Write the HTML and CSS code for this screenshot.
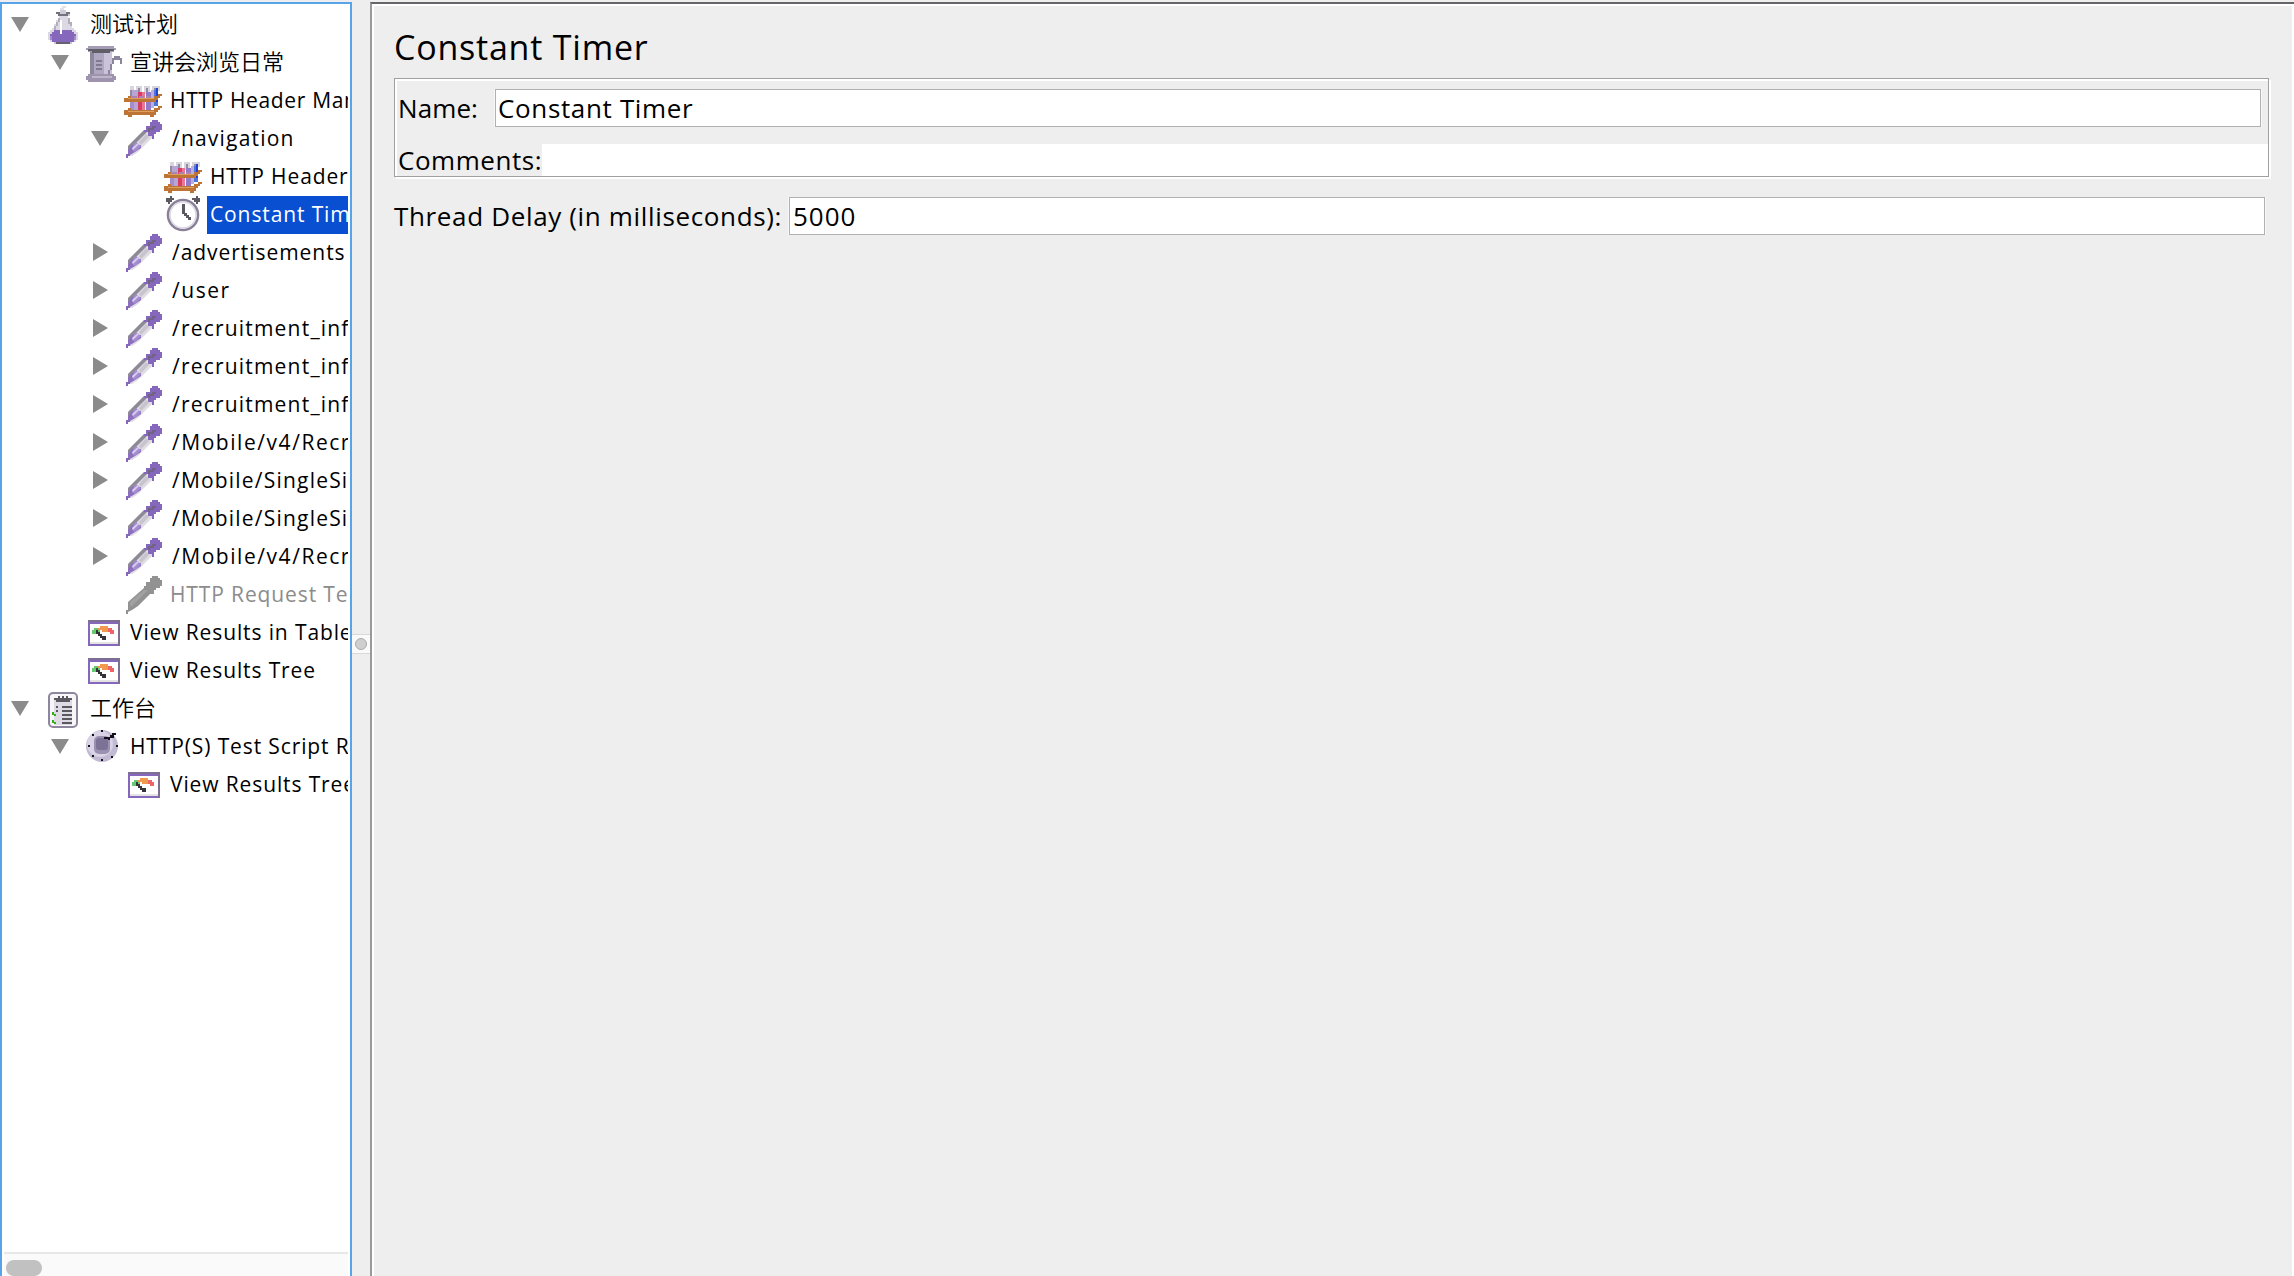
FILE: index.html
```html
<!DOCTYPE html>
<html lang="zh">
<head>
<meta charset="utf-8">
<title>Constant Timer</title>
<link rel="stylesheet" href="styles.css">
</head>
<body>
<svg class="sprite" aria-hidden="true" shape-rendering="crispEdges">
  <symbol id="down" viewBox="0 0 18 18"><path d="M0 2H18L9 17Z" fill="#8b8b8b" shape-rendering="auto"/></symbol>
  <symbol id="right" viewBox="0 0 18 18"><path d="M2 0V18L17 9Z" fill="#8b8b8b" shape-rendering="auto"/></symbol>
  <symbol id="flask" viewBox="0 0 40 38">
    <path d="M18 0h4v2h-2v2h-4V2h2z" fill="#e2e0e8"/>
    <path d="M16 4h6v2h-6zM14 6h12v4H14z" fill="#cfcbd8"/>
    <path d="M15 10h9v4h2v4h2v4h2v2h2v2h2v8h-2v2H6v-2H4v-8h2v-2h2v-2h2v-4h2v-4h3z" fill="#dcd9e4"/>
    <path d="M10 24h18v2h2v2h2v6h-2v2H8v-2H6v-6h2v-2h2z" fill="#8568bb"/>
    <path d="M6 30h2v4H6zM30 30h2v4h-2z" fill="#a28cca"/>
    <path d="M10 36h18v2H10z" fill="#c9c4d6"/>
    <path d="M12 36h14v2H12z" fill="#67636d"/>
    <path d="M12 6h4v2h-4zM14 8h10v2H14zM22 6h4v2h-4z" fill="#75717d"/>
    <path d="M14 12h2v4h-2v4h-2v4h-2v-4h2v-4h2zM24 12h2v4h2v4h-2v-2h-2z" fill="#b3afba"/>
    <path d="M16 14h2v14h-2z" fill="#fff"/>
  </symbol>
  <symbol id="beaker" viewBox="0 0 40 38">
    <path d="M6 6h22v26H6z" fill="#b0a7c2"/>
    <path d="M20 8h8v22h-8z" fill="#cbc3da"/>
    <path d="M6 8h4v24H6z" fill="#8e869b"/>
    <path d="M28 14h2v-2h6v2h2v6h-2v-4h-6v4h-2v6h-2v4h-2v-4h2v-6h2z" fill="#8d859c"/>
    <path d="M4 2h26v2h2v2h-2v2H4V6H2V4h2z" fill="#a69db6"/>
    <path d="M4 5h26v2H4zM8 7h18v2H8z" fill="#625e68"/>
    <path d="M12 16h6v2h-6zM12 20h6v2h-6zM12 24h6v2h-6z" fill="#827a90"/>
    <path d="M4 30h26v2h2v4h-2v2H4v-2H2v-4h2z" fill="#9e94ae"/>
    <path d="M8 32h20v2H8z" fill="#beb7cc"/>
  </symbol>
  <symbol id="rack" viewBox="0 0 40 38">
    <path d="M6 4h4v4H6zM12 4h6v8h-6zM20 4h6v8h-6zM28 4h8v5h-8z" fill="#d8d5dd"/>
    <path d="M6 8h2v8H6zM14 6h2v10h-2zM22 6h2v10h-2zM30 6h2v10h-2z" fill="#918aa0"/>
    <path d="M8 8h6v20H8z" fill="#b7a6d4"/><path d="M6 14h4v14H6z" fill="#a58cce"/>
    <path d="M14 10h4v18h-4z" fill="#d73d64"/><path d="M18 10h3v18h-3z" fill="#ea7894"/>
    <path d="M22 10h5v18h-5z" fill="#927acb"/><path d="M27 8h3v18h-3z" fill="#b5b0dc"/>
    <path d="M30 8h4v16h-4z" fill="#5272de"/><path d="M32 6h2v14h-2z" fill="#2244d0"/>
    <path d="M4 14h3v2h23v-2h4v-2h4v2h-2v2h-2v2h-2v2H0v-4h4z" fill="#bd7435"/>
    <path d="M4 26h3v2h23v-2h4v-2h4v2h-2v2h-2v2h-2v3h-2v2h-4v-2H8v2H4v-2H0v-5h4z" fill="#bd7435"/>
    <path d="M4 16h26v1H4zM4 29h26v1H4z" fill="#dca05d"/>
    <path d="M8 14h5v2H8zM15 14h5v2h-5zM22 14h5v2h-5z" fill="#a983b4"/>
  </symbol>
  <symbol id="pipette" viewBox="0 0 40 38">
    <path d="M20 10h4l4 4v4L14 32l-6 4H4V26z" fill="#dfdce3"/>
    <path d="M20 10h3v2L6 29v5H4v-8z" fill="#8d8995"/>
    <path d="M8 25h9v3l-6 4-5 3H4v-5z" fill="#8c70bf"/>
    <path d="M10 24l2-2 5 4-6 6-3-2z" fill="#a48dd0"/>
    <path d="M8 28l6-5 1 1-6 6z" fill="#d9cff0"/>
    <path d="M22 14l3 3-8 8-2-3z" fill="#c8c4ce"/>
    <path d="M2 34h4v2h-2v2H2z" fill="#8568bb"/>
    <path d="M28 0h6v2h2v2h2v6h-2v2h-4v2h-2v5h-2v-3h-4v-4h-4v-2h2V6h4V2h2z" fill="#8568bb"/>
    <path d="M24 8h4V6h4v2h-2v2h-4v2h-2z" fill="#716383"/>
  </symbol>
  <symbol id="pipette-off" viewBox="0 0 40 38">
    <path d="M28 0h6v2h2v2h2v6h-2v2h-4v2h-2v4h-4L14 30l-6 4-4 2v2H2v-4h2v-8L20 12v-2h2V6h4V2h2z" fill="#929292"/>
    <path d="M20 14h4L8 30H6v-4z" fill="#a1a1a1"/>
  </symbol>
  <symbol id="clock" viewBox="0 0 40 38">
    <g shape-rendering="auto">
    <circle cx="19" cy="19" r="15" fill="#fff" stroke="#8a8198" stroke-width="2.6"/>
    <circle cx="19" cy="19" r="13" fill="none" stroke="#dcd8e4" stroke-width="1.5"/>
    </g>
    <path d="M2 2h4V0h2v2h2v2H8v2H6v2H4V6H2zM30 2h2V0h2v2h2v4h-2v2h-2V6h-2V4h-2V2z" fill="#5d5963"/>
    <path d="M18 8h3v9h2v2h2v2h2v3h-3v-2h-2v-2h-2v-2h-2z" fill="#5b5761"/>
  </symbol>
  <symbol id="results" viewBox="0 0 40 38">
    <path d="M4 6h32v26H4z" fill="#8568bb"/><path d="M4 6h32v2H4zM34 6h2v26h-2z" fill="#7c6f91"/>
    <path d="M6 10h28v20H6z" fill="#fff"/><path d="M6 28h28v2H6z" fill="#e4e4e4"/>
    <path d="M8 16h2v-2h6v4h-2v2H8z" fill="#66cb70"/>
    <path d="M16 12h8v2h2v4h-8v-2h-4v-2h2z" fill="#f29950"/>
    <path d="M24 14h4v2h2v4h-4v-2h-2z" fill="#ee6365"/>
    <path d="M12 16h2v2h2v2h2v2h4v4h-4v-2h-2v-2h-2v-2h-2z" fill="#36323a"/>
  </symbol>
  <symbol id="clipboard" viewBox="0 0 40 38">
    <rect x="5" y="3" width="28" height="34" rx="4" fill="#f7f6f9" stroke="#8e859f" stroke-width="2" shape-rendering="auto"/>
    <path d="M10 8h18v27H10z" fill="#dedbe4"/>
    <path d="M10 8h18v2H10zM12 10h14v2H12zM14 6h2v2h-2zM18 6h2v2h-2zM22 6h2v2h-2z" fill="#5c5862"/>
    <path d="M18 16h10v2H18zM18 20h10v2H18zM18 24h10v2H18zM18 28h10v2H18zM18 32h10v2H18zM12 16h2v2h-2zM12 20h2v2h-2z" fill="#5c5862"/>
    <path d="M8 22h2v2h2v2h-2v-1H8zM8 30h2v2h2v2h-2v-1H8z" fill="#36ad19"/>
  </symbol>
  <symbol id="recorder" viewBox="0 0 40 38">
    <g shape-rendering="auto"><circle cx="18" cy="18" r="16" fill="#c2bad3"/><circle cx="16" cy="16" r="13" fill="#d9d3e5"/><rect x="10" y="8" width="16" height="18" rx="5" fill="#9a91b0"/><rect x="12" y="10" width="12" height="12" rx="3" fill="#7c7296"/></g>
    <path d="M17 2h2v2h-2zM8 6h2v2H8zM4 17h2v2H4zM8 27h2v2H8zM17 31h2v2h-2zM27 28h2v2h-2zM32 17h2v2h-2zM20 9h6V7h2V5h4v2h-2v3h-4v2h-2v-1h-4z" fill="#15111a"/>
  </symbol>
</svg>
<main class="window">
  <nav class="sidebar">
    <ul class="tree">
      <li class="row l0"><svg class="tw"><use href="#down"/></svg><svg class="icon"><use href="#flask"/></svg><span class="label cjk">测试计划</span></li>
      <li class="row l1"><svg class="tw"><use href="#down"/></svg><svg class="icon"><use href="#beaker"/></svg><span class="label cjk">宣讲会浏览日常</span></li>
      <li class="row l2"><i class="tw"></i><svg class="icon"><use href="#rack"/></svg><span class="label snug">HTTP Header Man</span></li>
      <li class="row l2"><svg class="tw"><use href="#down"/></svg><svg class="icon"><use href="#pipette"/></svg><span class="label path">/navigation</span></li>
      <li class="row l3"><i class="tw"></i><svg class="icon"><use href="#rack"/></svg><span class="label">HTTP Header</span></li>
      <li class="row l3"><i class="tw"></i><svg class="icon"><use href="#clock"/></svg><span class="label selected">Constant Timer</span></li>
      <li class="row l2"><svg class="tw"><use href="#right"/></svg><svg class="icon"><use href="#pipette"/></svg><span class="label path tight">/advertisements</span></li>
      <li class="row l2"><svg class="tw"><use href="#right"/></svg><svg class="icon"><use href="#pipette"/></svg><span class="label path wide">/user</span></li>
      <li class="row l2"><svg class="tw"><use href="#right"/></svg><svg class="icon"><use href="#pipette"/></svg><span class="label path">/recruitment_inf</span></li>
      <li class="row l2"><svg class="tw"><use href="#right"/></svg><svg class="icon"><use href="#pipette"/></svg><span class="label path">/recruitment_inf</span></li>
      <li class="row l2"><svg class="tw"><use href="#right"/></svg><svg class="icon"><use href="#pipette"/></svg><span class="label path">/recruitment_inf</span></li>
      <li class="row l2"><svg class="tw"><use href="#right"/></svg><svg class="icon"><use href="#pipette"/></svg><span class="label path wide">/Mobile/v4/Recr</span></li>
      <li class="row l2"><svg class="tw"><use href="#right"/></svg><svg class="icon"><use href="#pipette"/></svg><span class="label path">/Mobile/SingleSig</span></li>
      <li class="row l2"><svg class="tw"><use href="#right"/></svg><svg class="icon"><use href="#pipette"/></svg><span class="label path">/Mobile/SingleSig</span></li>
      <li class="row l2"><svg class="tw"><use href="#right"/></svg><svg class="icon"><use href="#pipette"/></svg><span class="label path wide">/Mobile/v4/Recr</span></li>
      <li class="row l2"><i class="tw"></i><svg class="icon"><use href="#pipette-off"/></svg><span class="label disabled">HTTP Request Te</span></li>
      <li class="row l1"><i class="tw"></i><svg class="icon"><use href="#results"/></svg><span class="label">View Results in Table</span></li>
      <li class="row l1"><i class="tw"></i><svg class="icon"><use href="#results"/></svg><span class="label">View Results Tree</span></li>
      <li class="row l0"><svg class="tw"><use href="#down"/></svg><svg class="icon"><use href="#clipboard"/></svg><span class="label cjk">工作台</span></li>
      <li class="row l1"><svg class="tw"><use href="#down"/></svg><svg class="icon"><use href="#recorder"/></svg><span class="label">HTTP(S) Test Script R</span></li>
      <li class="row l2"><i class="tw"></i><svg class="icon"><use href="#results"/></svg><span class="label">View Results Tree</span></li>
    </ul>
    <div class="scrollbar"><div class="thumb"></div></div>
  </nav>
  <div class="divider"><div class="grip"><span class="knob"></span></div></div>
  <section class="panel">
    <h1 class="title">Constant Timer</h1>
    <div class="group">
      <div class="line name-line"><label class="name">Name:</label><div class="field">Constant Timer</div></div>
      <div class="line comments-line"><label class="comments">Comments:</label><div class="comment-field"></div></div>
    </div>
    <div class="line delay-line"><label class="delay">Thread Delay (in milliseconds):</label><div class="field number">5000</div></div>
  </section>
</main>
</body>
</html>
```
FILE: styles.css
```css
* { box-sizing: border-box; }
body { margin: 0; background: #eee; color: #000; font-family: "Open Sans", "Noto Sans CJK SC", sans-serif; }
.sprite { display: none; }
.window { display: flex; width: 2294px; height: 1276px; padding-top: 2px; overflow: hidden; }

.sidebar { display: flex; flex-direction: column; flex: none; width: 352px; background: #fff; border: 2px solid #58a4e8; border-bottom: 0; }
.tree { flex: 1; margin: 0 2px 0 0; padding: 2px 0 0; list-style: none; overflow: hidden; }
.row { display: flex; align-items: center; height: 38px; white-space: nowrap; }
.l0 { padding-left: 9px; }
.l1 { padding-left: 49px; }
.l2 { padding-left: 89px; }
.l3 { padding-left: 129px; }
.tw { flex: none; width: 18px; height: 18px; margin: 0 15px 2px 0; }
.icon { flex: none; width: 40px; height: 38px; margin-right: 3px; }
.label { flex: none; height: 38px; padding-left: 3px; font-size: 21px; line-height: 36px; letter-spacing: 0.88px; }
.snug { letter-spacing: 0.65px; }
.path { padding-left: 5px; letter-spacing: 1.2px; }
.tight { letter-spacing: 0.95px; }
.wide { letter-spacing: 1.55px; }
.cjk { padding-left: 3px; font-family: "Noto Sans CJK SC", sans-serif; font-size: 22px; font-weight: 350; line-height: 33px; letter-spacing: 0; }
.selected { background: #094fd1; color: #fff; }
.disabled { color: #8c8c8c; }
.scrollbar { flex: none; height: 24px; margin: 0 2px; padding: 6px 2px 0; background: #fafafa; border-top: 2px solid #e7e7e7; }
.thumb { width: 36px; height: 16px; border-radius: 8px; background: #c1c1c1; }

.divider { display: flex; flex: none; align-items: flex-start; width: 18px; padding-top: 632px; }
.grip { display: flex; align-items: center; justify-content: center; width: 18px; height: 20px; background: #fafafa; border: solid #d9d9d9; border-width: 1px 0; }
.knob { width: 12px; height: 12px; border-radius: 50%; background: #cfcfcf; border: 1px solid #aaa; }

.panel { flex: 1; min-width: 0; padding: 0 20px 0 20px; border-left: 2px solid #999; border-top: 2px solid #656569; box-shadow: inset 2px 2px #fff, inset -2px 0 #fff; }
.title { height: 54px; margin: 16px 0 4px; padding-left: 2px; font-size: 34px; line-height: 54px; font-weight: 400; letter-spacing: 0.78px; }
.group { width: 1875px; height: 99px; margin-left: 2px; padding: 10px 0 0 3px; border: 1px solid #a0a0a0; box-shadow: inset 2px 2px #fff, 2px 2px #fff; }
.line { display: flex; font-size: 26px; white-space: nowrap; }
.field { flex: 1; height: 38px; padding-left: 2px; border: 1px solid #b0b0b0; background: #fff; box-shadow: 1px 0 #f8f8f8, -1px 0 #f8f8f8; line-height: 36px; letter-spacing: 0.65px; }
.name { width: 97px; line-height: 38px; letter-spacing: 0.1px; }
.name-line { padding-right: 7px; }
.comments-line { height: 32px; margin-top: 17px; }
.comments { width: 144px; line-height: 32px; letter-spacing: 0.55px; }
.comment-field { flex: 1; background: #fff; }
.delay-line { margin: 20px 9px 0 2px; }
.delay { width: 395px; line-height: 38px; letter-spacing: 0.65px; }
.number { padding-left: 3px; letter-spacing: 1px; }
```
